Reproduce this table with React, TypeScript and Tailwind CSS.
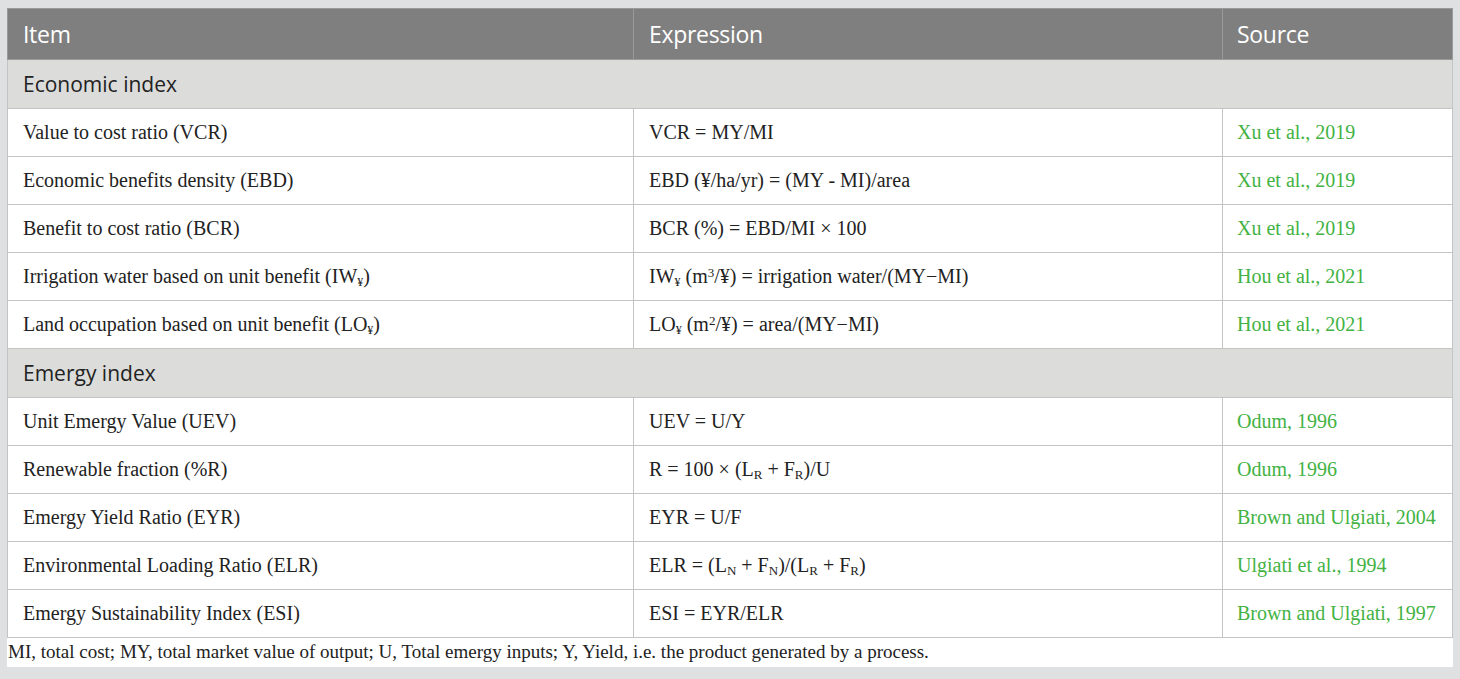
import type { ReactNode } from "react";

type Row = { item: ReactNode; expr: ReactNode; source: string };

const S = ({ children }: { children: ReactNode }) => (
  <sub className="text-[13px]">{children}</sub>
);

const Yen = () => <sub className="text-[12px]">¥</sub>;

const economic: Row[] = [
  { item: "Value to cost ratio (VCR)", expr: "VCR = MY/MI", source: "Xu et al., 2019" },
  {
    item: "Economic benefits density (EBD)",
    expr: "EBD (¥/ha/yr) = (MY - MI)/area",
    source: "Xu et al., 2019",
  },
  { item: "Benefit to cost ratio (BCR)", expr: "BCR (%) = EBD/MI × 100", source: "Xu et al., 2019" },
  {
    item: (
      <>
        Irrigation water based on unit benefit (IW<Yen />)
      </>
    ),
    expr: (
      <>
        IW<Yen /> (m<sup className="text-[13px]">3</sup>/¥) = irrigation water/(MY−MI)
      </>
    ),
    source: "Hou et al., 2021",
  },
  {
    item: (
      <>
        Land occupation based on unit benefit (LO<Yen />)
      </>
    ),
    expr: (
      <>
        LO<Yen /> (m<sup className="text-[13px]">2</sup>/¥) = area/(MY−MI)
      </>
    ),
    source: "Hou et al., 2021",
  },
];

const emergy: Row[] = [
  { item: "Unit Emergy Value (UEV)", expr: "UEV = U/Y", source: "Odum, 1996" },
  {
    item: "Renewable fraction (%R)",
    expr: (
      <>
        R = 100 × (L<S>R</S> + F<S>R</S>)/U
      </>
    ),
    source: "Odum, 1996",
  },
  { item: "Emergy Yield Ratio (EYR)", expr: "EYR = U/F", source: "Brown and Ulgiati, 2004" },
  {
    item: "Environmental Loading Ratio (ELR)",
    expr: (
      <>
        ELR = (L<S>N</S> + F<S>N</S>)/(L<S>R</S> + F<S>R</S>)
      </>
    ),
    source: "Ulgiati et al., 1994",
  },
  {
    item: "Emergy Sustainability Index (ESI)",
    expr: "ESI = EYR/ELR",
    source: "Brown and Ulgiati, 1997",
  },
];

const sans = "font-['Open_Sans',sans-serif]";

const SectionRow = ({ label }: { label: string }) => (
  <tr className="h-[49px] bg-[#dcdcda]">
    <td colSpan={3} className={`border border-[#c4c4c4] px-[15px] text-[21px] text-[#222] ${sans}`}>
      {label}
    </td>
  </tr>
);

const DataRow = ({ row }: { row: Row }) => (
  <tr className="h-[48px] bg-white">
    <td className="border border-[#c4c4c4] px-[15px] text-[#222]">{row.item}</td>
    <td className="border border-[#c4c4c4] px-[15px] text-[#222]">{row.expr}</td>
    <td className="border border-[#c4c4c4] px-[14px] text-[#43b243]">{row.source}</td>
  </tr>
);

export default function App() {
  return (
    <div className="min-h-[679px] bg-[#dfe0e2] px-[7px] pt-[8px] pb-[9px]">
      <table className="w-full table-fixed border-collapse font-['Liberation_Serif',serif] text-[20px] leading-tight">
        <colgroup>
          <col className="w-[626px]" />
          <col className="w-[589px]" />
          <col />
        </colgroup>
        <thead>
          <tr className={`h-[51px] bg-[#7f7f7f] text-left text-[23px] tracking-[-0.3px] text-white ${sans}`}>
            <th className="border border-[#9a9a9a] px-[15px] font-normal">Item</th>
            <th className="border border-[#9a9a9a] px-[15px] font-normal">Expression</th>
            <th className="border border-[#9a9a9a] px-[14px] font-normal">Source</th>
          </tr>
        </thead>
        <tbody>
          <SectionRow label="Economic index" />
          {economic.map((r, i) => (
            <DataRow key={i} row={r} />
          ))}
          <SectionRow label="Emergy index" />
          {emergy.map((r, i) => (
            <DataRow key={i} row={r} />
          ))}
        </tbody>
      </table>
      <p className="h-[29px] bg-white pl-px font-['Liberation_Serif',serif] text-[19px] leading-[28px] text-[#222]">
        MI, total cost; MY, total market value of output; U, Total emergy inputs; Y, Yield, i.e. the
        product generated by a process.
      </p>
    </div>
  );
}
